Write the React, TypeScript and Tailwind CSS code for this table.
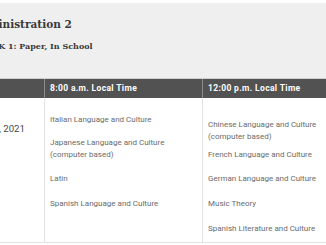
import React from 'react';

const col2 = [
  { text: ['Italian Language and Culture'], mt: 'mt-[16px]' },
  { text: ['Japanese Language and Culture', '(computer based)'], mt: 'mt-[11px]' },
  { text: ['Latin'], mt: 'mt-[12px]' },
  { text: ['Spanish Language and Culture'], mt: 'mt-[13px]' },
];

const col3 = [
  { text: ['Chinese Language and Culture', '(computer based)'], mt: 'mt-[21px]' },
  { text: ['French Language and Culture'], mt: 'mt-[6px]' },
  { text: ['German Language and Culture'], mt: 'mt-[12px]' },
  { text: ['Music Theory'], mt: 'mt-[13px]' },
  { text: ['Spanish Literature and Culture'], mt: 'mt-[13px]' },
];

function Subjects({ items }: { items: { text: string[]; mt: string }[] }) {
  return (
    <div className="flex flex-col pl-[5px] pb-[7px] text-[8px] leading-[12px] text-[#6b6b6b]">
      {items.map((it) => (
        <div key={it.text[0]} className={it.mt}>
          {it.text.map((t) => (
            <div key={t} className="whitespace-nowrap">{t}</div>
          ))}
        </div>
      ))}
    </div>
  );
}

export default function App() {
  return (
    <div className="w-[326px] h-[245px] overflow-hidden bg-white pt-[3px] font-['Roboto',sans-serif]">
      <div className="ml-[-76px] w-[600px]">
        <div className="h-[75px] bg-[#efefef] pl-[48px] pt-[14px] text-[#3a3a3a] font-['DejaVu_Serif',serif] font-bold">
          <div className="text-[10.5px] leading-[14px]">Administration 2</div>
          <div className="mt-[10px] ml-[5px] text-[8px] leading-[11px]">WEEK 1: Paper, In School</div>
        </div>

        <div className="grid grid-cols-[120px_158px_320px] border-t border-[#cfcfcf]">
          <div className="h-[19px] bg-[#525252]" />
          <div className="h-[19px] bg-[#525252] border-l border-[#8c8c8c] pl-[5px] flex items-center text-[8.5px] font-bold tracking-[0.35px] text-white">
            8:00 a.m. Local Time
          </div>
          <div className="h-[19px] bg-[#525252] border-l border-[#8c8c8c] pl-[5px] flex items-center text-[8.5px] font-bold tracking-[0.35px] text-white">
            12:00 p.m. Local Time
          </div>

          <div className="border-b border-[#e2e2e2] pl-[5px] pt-[25px] text-[9.7px] leading-[12px] text-[#4a4a4a] whitespace-nowrap">
            Monday, May 24, 2021
          </div>
          <div className="border-b border-l border-[#e2e2e2]">
            <Subjects items={col2} />
          </div>
          <div className="border-b border-l border-[#e2e2e2]">
            <Subjects items={col3} />
          </div>
        </div>
      </div>
    </div>
  );
}
